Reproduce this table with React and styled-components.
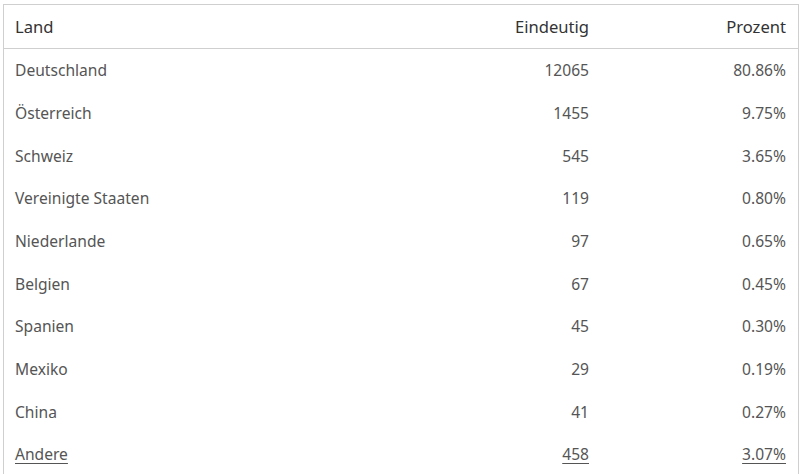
import React from "react";
import styled, { createGlobalStyle } from "styled-components";

const Global = createGlobalStyle`
  html, body { margin: 0; padding: 0; background: #fff; }
  body { font-family: "Noto Sans", "Open Sans", sans-serif; }
`;

const Page = styled.div`
  padding: 4px 8px 0 3px;
`;

const Table = styled.div`
  width: 796px;
  border: 1px solid #cfcfcf;
  border-bottom: none;
  box-sizing: border-box;
`;

const Row = styled.div`
  display: grid;
  grid-template-columns: 398px 199px 1fr;
  height: ${(p) => (p.$head ? "44px" : "42.67px")};
  align-items: center;
  border-bottom: ${(p) => (p.$head ? "1px solid #cfcfcf" : "none")};
  box-sizing: border-box;
  font-size: ${(p) => (p.$head ? "16.6px" : "15.6px")};
  line-height: 22px;
  color: ${(p) => (p.$head ? "#333" : "#555")};
`;

const Cell = styled.div`
  padding: 0 12px 0 11px;
  text-align: ${(p) => (p.$right ? "right" : "left")};
  white-space: nowrap;
  text-decoration: ${(p) => (p.$link ? "underline" : "none")};
  text-underline-offset: 3px;
`;

const data = [
  ["Deutschland", "12065", "80.86%"],
  ["Österreich", "1455", "9.75%"],
  ["Schweiz", "545", "3.65%"],
  ["Vereinigte Staaten", "119", "0.80%"],
  ["Niederlande", "97", "0.65%"],
  ["Belgien", "67", "0.45%"],
  ["Spanien", "45", "0.30%"],
  ["Mexiko", "29", "0.19%"],
  ["China", "41", "0.27%"],
  ["Andere", "458", "3.07%", true],
];

export default function App() {
  return (
    <>
      <Global />
      <Page>
        <Table>
          <Row $head>
            <Cell>Land</Cell>
            <Cell $right>Eindeutig</Cell>
            <Cell $right>Prozent</Cell>
          </Row>
          {data.map(([land, n, pct, link]) => (
            <Row key={land}>
              <Cell $link={link}>{land}</Cell>
              <Cell $right $link={link}>{n}</Cell>
              <Cell $right $link={link}>{pct}</Cell>
            </Row>
          ))}
        </Table>
      </Page>
    </>
  );
}
